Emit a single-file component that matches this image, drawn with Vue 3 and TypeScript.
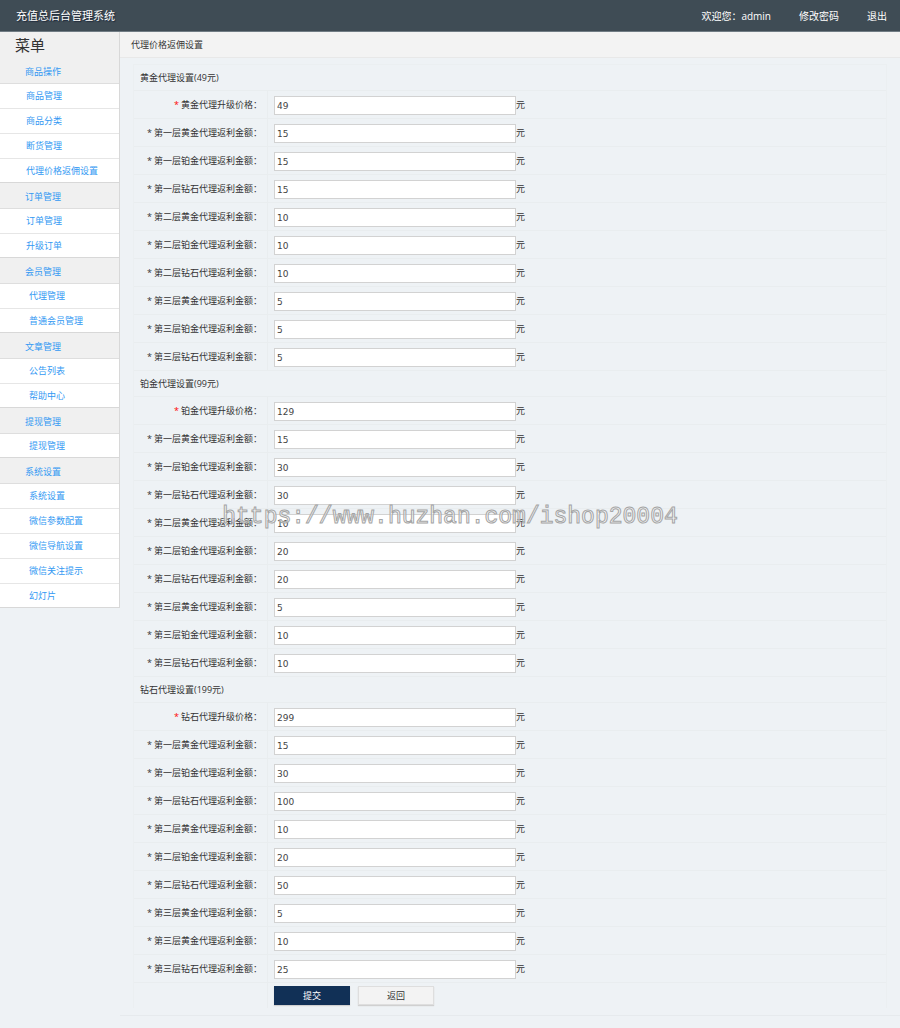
<script setup lang="ts">
import { reactive } from 'vue'

interface MenuGroup {
  title: string
  items: string[]
  nested: boolean
}

interface Field {
  label: string
  value: string
}

interface Section {
  title: string
  fields: Field[]
}

const menu: MenuGroup[] = [
  { title: '商品操作', nested: false, items: ['商品管理', '商品分类', '断货管理', '代理价格返佣设置'] },
  { title: '订单管理', nested: false, items: ['订单管理', '升级订单'] },
  { title: '会员管理', nested: true, items: ['代理管理', '普通会员管理'] },
  { title: '文章管理', nested: true, items: ['公告列表', '帮助中心'] },
  { title: '提现管理', nested: true, items: ['提现管理'] },
  { title: '系统设置', nested: true, items: ['系统设置', '微信参数配置', '微信导航设置', '微信关注提示', '幻灯片'] },
]

const sections = reactive<Section[]>([
  {
    title: '黄金代理设置(49元)',
    fields: [
      { label: '黄金代理升级价格', value: '49' },
      { label: '第一层黄金代理返利金额', value: '15' },
      { label: '第一层铂金代理返利金额', value: '15' },
      { label: '第一层钻石代理返利金额', value: '15' },
      { label: '第二层黄金代理返利金额', value: '10' },
      { label: '第二层铂金代理返利金额', value: '10' },
      { label: '第二层钻石代理返利金额', value: '10' },
      { label: '第三层黄金代理返利金额', value: '5' },
      { label: '第三层铂金代理返利金额', value: '5' },
      { label: '第三层钻石代理返利金额', value: '5' },
    ],
  },
  {
    title: '铂金代理设置(99元)',
    fields: [
      { label: '铂金代理升级价格', value: '129' },
      { label: '第一层黄金代理返利金额', value: '15' },
      { label: '第一层铂金代理返利金额', value: '30' },
      { label: '第一层钻石代理返利金额', value: '30' },
      { label: '第二层黄金代理返利金额', value: '10' },
      { label: '第二层铂金代理返利金额', value: '20' },
      { label: '第二层钻石代理返利金额', value: '20' },
      { label: '第三层黄金代理返利金额', value: '5' },
      { label: '第三层铂金代理返利金额', value: '10' },
      { label: '第三层钻石代理返利金额', value: '10' },
    ],
  },
  {
    title: '钻石代理设置(199元)',
    fields: [
      { label: '钻石代理升级价格', value: '299' },
      { label: '第一层黄金代理返利金额', value: '15' },
      { label: '第一层铂金代理返利金额', value: '30' },
      { label: '第一层钻石代理返利金额', value: '100' },
      { label: '第二层黄金代理返利金额', value: '10' },
      { label: '第二层铂金代理返利金额', value: '20' },
      { label: '第二层钻石代理返利金额', value: '50' },
      { label: '第三层黄金代理返利金额', value: '5' },
      { label: '第三层黄金代理返利金额', value: '10' },
      { label: '第三层钻石代理返利金额', value: '25' },
    ],
  },
])
</script>

<template>
  <div class="page">
    <header class="topbar">
      <h1 class="brand">充值总后台管理系统</h1>
      <nav class="account">
        <span>欢迎您：admin</span>
        <a href="#">修改密码</a>
        <a href="#">退出</a>
      </nav>
    </header>

    <div class="body">
      <aside class="sidebar">
        <h2 class="menu-title">菜单</h2>
        <section v-for="group in menu" :key="group.title" class="group">
          <h3 class="group-title"><a href="#">{{ group.title }}</a></h3>
          <ul class="group-items" :class="{ nested: group.nested }">
            <li v-for="item in group.items" :key="item"><a href="#">{{ item }}</a></li>
          </ul>
        </section>
      </aside>

      <main class="content">
        <h2 class="crumb">代理价格返佣设置</h2>
        <form class="form" @submit.prevent>
          <section v-for="(section, s) in sections" :key="s">
            <h3 class="section-title">{{ section.title }}</h3>
            <div v-for="(field, f) in section.fields" :key="f" class="row">
              <label class="label" :for="`field-${s}-${f}`">
                <span class="star" :class="{ required: f === 0 }">*</span>{{ field.label }}：
              </label>
              <div class="control">
                <input :id="`field-${s}-${f}`" v-model="field.value" type="text" />
                <span class="unit">元</span>
              </div>
            </div>
          </section>
          <div class="row actions">
            <span class="label"></span>
            <div class="control buttons">
              <button type="submit" class="primary">提交</button>
              <button type="button">返回</button>
            </div>
          </div>
        </form>
      </main>
    </div>

    <div class="watermark">https://www.huzhan.com/ishop20004</div>
  </div>
</template>

<style>
body {
  margin: 0;
  background: #eef2f5;
}
</style>

<style scoped>
.page {
  position: relative;
  min-height: 100vh;
  font: 9px/16px "Open Sans", "Noto Sans CJK SC", sans-serif;
  color: #333;
}

h1, h2, h3, ul {
  margin: 0;
  padding: 0;
  font-weight: 400;
  list-style: none;
}

a {
  color: inherit;
  text-decoration: none;
}

.topbar {
  display: flex;
  align-items: center;
  justify-content: space-between;
  box-sizing: border-box;
  height: 32px;
  padding: 0 13px 0 16px;
  background: #3f4c55;
  border-bottom: 1px solid #707c84;
  color: #fff;
}

.brand {
  font-size: 11px;
  text-shadow: 1px 1px 1px #1c2638;
}

.account {
  display: flex;
  gap: 28px;
  font-size: 10px;
}

.body {
  display: flex;
  align-items: flex-start;
}

.sidebar {
  flex: none;
  box-sizing: border-box;
  width: 120px;
  background: #f0f0f0;
  border-right: 1px solid #d8d8d8;
}

.menu-title {
  padding-left: 15px;
  font-size: 15px;
  line-height: 26px;
}

.group {
  color: #3399f3;
}

.group-title {
  box-sizing: border-box;
  height: 26px;
  padding-left: 25px;
  border-bottom: 1px solid #dedede;
  font-size: 9px;
  line-height: 28px;
}

.group-items {
  background: #fff;
}

.group-items li {
  padding-left: 26px;
  border-bottom: 1px solid #e6e6e6;
  line-height: 24px;
}

.group-items li:last-child {
  border-bottom: 0;
  box-shadow: inset 0 -1px #d8d8d8;
}

.group-items.nested li {
  padding-left: 29px;
}

.content {
  flex: 1;
  min-width: 0;
  border-bottom: 1px solid #e6eaed;
  padding-bottom: 7px;
}

.crumb {
  padding-left: 11px;
  background: #f3f3f3;
  border-bottom: 1px solid #e8e8e8;
  font-size: 9px;
  line-height: 25px;
}

.form {
  margin: 6px 13px 0;
  border: 1px solid #ebeff1;
  border-bottom: 0;
}

.section-title {
  box-sizing: border-box;
  height: 26px;
  padding-left: 6px;
  border-bottom: 1px solid #e9edef;
  font-size: 9px;
  line-height: 26px;
}

.row {
  display: flex;
  box-sizing: border-box;
  height: 28px;
  border-bottom: 1px solid #e9edef;
}

.label {
  flex: none;
  box-sizing: border-box;
  width: 134px;
  padding-right: 5px;
  border-right: 1px solid #e9edef;
  line-height: 28px;
  text-align: right;
}

.star {
  margin-right: 2px;
}

.required {
  color: #f00;
}

.control {
  display: flex;
  align-items: flex-start;
  flex: 1;
  min-width: 0;
  padding: 5px 6px 0;
}

.control input {
  box-sizing: border-box;
  flex: 0 1 242px;
  min-width: 0;
  height: 19px;
  padding: 1px 2px 0;
  background: #fff;
  border: 1px solid #d2d2d2;
  border-radius: 0;
  color: #444;
  font: 9px "DejaVu Sans", sans-serif;
}

.unit {
  line-height: 18px;
}

.actions {
  height: 25px;
  border-bottom: 0;
}

.buttons {
  gap: 8px;
  padding-top: 3px;
}

.buttons button {
  box-sizing: border-box;
  width: 76px;
  height: 19px;
  padding: 0;
  background: #f3f3f3;
  border: 1px solid #dedede;
  box-shadow: 0 1px 1px #d0d0d0;
  color: #333;
  font: inherit;
}

.buttons .primary {
  background: #113056;
  border-color: #113056;
  color: #fff;
}

.watermark {
  position: absolute;
  top: 50%;
  left: 50%;
  padding-top: 6px;
  transform: translate(-50%, -50%);
  color: rgba(255, 255, 255, 0.6);
  font: 23px/32px "Liberation Mono", monospace;
  white-space: nowrap;
  pointer-events: none;
  -webkit-text-stroke: 1px #a4a4a4;
}
</style>
